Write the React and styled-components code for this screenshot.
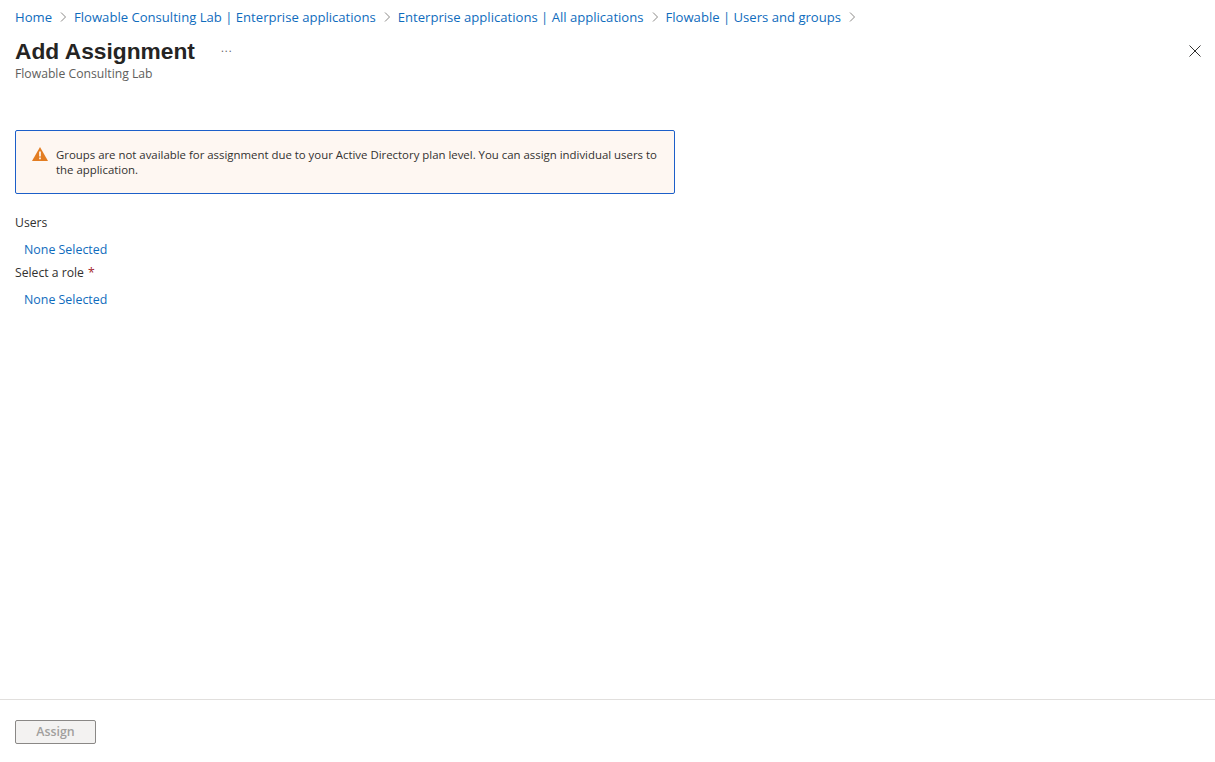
import React from "react";
import styled, { createGlobalStyle } from "styled-components";

const GlobalStyle = createGlobalStyle`
  html, body {
    margin: 0;
    height: 100%;
    background: #fff;
    font-family: "Open Sans", "Liberation Sans", sans-serif;
    color: #292827;
  }
`;

const Page = styled.div`
  display: flex;
  flex-direction: column;
  height: 762px;
  overflow: hidden;
`;

const Main = styled.div`
  flex: 1;
  padding: 0 11px 0 15px;
`;

const Breadcrumbs = styled.nav`
  display: flex;
  align-items: center;
  height: 33px;
  margin-bottom: 2px;
`;

const Crumb = styled.a`
  font-size: 13.1px;
  color: #0f6cbd;
  white-space: nowrap;
`;

const Chevron = styled.svg`
  width: 8px;
  height: 10px;
  margin: 1px 7px 0 7px;
  fill: none;
  stroke: #8a8886;
  stroke-width: 1;
`;

const TitleRow = styled.div`
  display: flex;
  align-items: flex-start;
  justify-content: space-between;
`;

const TitleLeft = styled.div`
  display: flex;
  align-items: center;
  height: 32px;
`;

const Title = styled.h1`
  margin: 0;
  font-family: "Liberation Sans", sans-serif;
  font-size: 22.75px;
  font-weight: 700;
  color: #252423;
`;

const More = styled.span`
  margin-left: 26px;
  margin-bottom: 8px;
  font-size: 11px;
  line-height: 1;
  letter-spacing: 1px;
  color: #605e5c;
`;

const Close = styled.svg`
  width: 12px;
  height: 12px;
  margin: 10px 3px 0 0;
  stroke: #323130;
  stroke-width: 1;
  fill: none;
`;

const Subtitle = styled.div`
  font-size: 12.2px;
  line-height: 14px;
  color: #605e5c;
`;

const Alert = styled.div`
  display: flex;
  align-items: flex-start;
  box-sizing: border-box;
  width: 660px;
  height: 64px;
  margin-top: 49px;
  padding: 16px 16px 0;
  background: #fef7f2;
  border: 1px solid #1c5fc9;
  border-radius: 2px;
`;

const AlertIcon = styled.svg`
  flex: none;
  width: 16px;
  height: 14px;
  margin-right: 8px;
`;

const AlertText = styled.p`
  margin: 0;
  font-size: 11.4px;
  line-height: 15px;
  color: #323130;
`;

const Field = styled.div`
  display: flex;
  flex-direction: column;
  margin-top: ${(p) => p.$top}px;
`;

const Label = styled.label`
  font-size: 12.2px;
  line-height: 16px;
  color: #323130;
`;

const Required = styled.span`
  color: #a4262c;
  margin-left: 4px;
`;

const Picker = styled.a`
  margin: 11px 0 0 9px;
  font-size: 12.4px;
  line-height: 16px;
  color: #0f6cbd;
`;

const Footer = styled.footer`
  flex: none;
  height: 63px;
  box-sizing: border-box;
  padding: 20px 15px 0;
  border-top: 1px solid #e1dfdd;
`;

const AssignButton = styled.button`
  display: block;
  width: 81px;
  height: 24px;
  padding: 0 0 2px;
  font-family: inherit;
  font-size: 12.4px;
  font-weight: 600;
  color: #a19f9d;
  background: #f3f2f1;
  border: 1px solid #8a8886;
  border-radius: 2px;
`;

const crumbs = [
  "Home",
  "Flowable Consulting Lab | Enterprise applications",
  "Enterprise applications | All applications",
  "Flowable | Users and groups",
];

export default function App() {
  return (
    <Page>
      <GlobalStyle />
      <Main>
        <Breadcrumbs>
          {crumbs.map((c) => (
            <React.Fragment key={c}>
              <Crumb>{c}</Crumb>
              <Chevron viewBox="0 0 8 10">
                <path d="M2 0.5 L6.5 5 L2 9.5" />
              </Chevron>
            </React.Fragment>
          ))}
        </Breadcrumbs>
        <TitleRow>
          <TitleLeft>
            <Title>Add Assignment</Title>
            <More>...</More>
          </TitleLeft>
          <Close viewBox="0 0 12 12">
            <path d="M0.5 0.5 L11.5 11.5 M11.5 0.5 L0.5 11.5" />
          </Close>
        </TitleRow>
        <Subtitle>Flowable Consulting Lab</Subtitle>
        <Alert>
          <AlertIcon viewBox="0 0 16 14">
            <path d="M8 0 L16 14 L0 14 Z" fill="#e37d22" />
            <path d="M7.2 4.5 H8.8 V9.5 H7.2 Z M7.2 10.5 H8.8 V12.2 H7.2 Z" fill="#fff" />
          </AlertIcon>
          <AlertText>
            Groups are not available for assignment due to your Active Directory plan level. You can assign individual users to the application.
          </AlertText>
        </Alert>
        <Field $top={21}>
          <Label>Users</Label>
          <Picker>None Selected</Picker>
        </Field>
        <Field $top={7}>
          <Label>
            Select a role<Required>*</Required>
          </Label>
          <Picker>None Selected</Picker>
        </Field>
      </Main>
      <Footer>
        <AssignButton disabled>Assign</AssignButton>
      </Footer>
    </Page>
  );
}
